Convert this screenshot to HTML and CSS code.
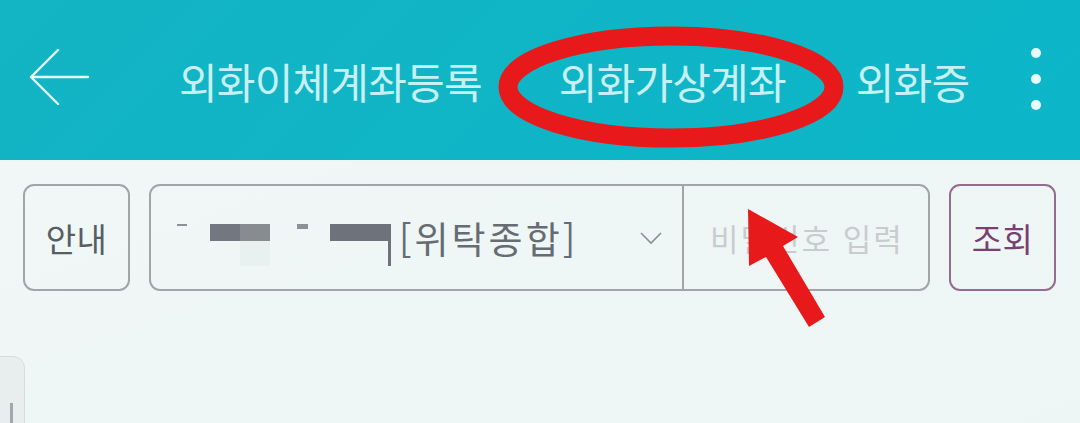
FILE: index.html
```html
<!DOCTYPE html>
<html lang="ko">
<head>
    <meta charset="UTF-8">
    <meta name="viewport" content="width=device-width, initial-scale=1.0">
    <title>외화가상계좌</title>
    <link rel="stylesheet" href="styles.css">
</head>
<body>
    <div class="header">
        <button class="back-btn" aria-label="뒤로">
            <svg width="60" height="56" viewBox="0 0 60 56">
                <path d="M59 28 H2 M29 1 L2 28 L29 55" fill="none" stroke="#e6f9fa" stroke-width="2.4" stroke-linecap="round" stroke-linejoin="round"/>
            </svg>
        </button>
        <div class="tabs">
            <div class="tab tab-first">외화이체계좌등록</div>
            <div class="tab tab-active">외화가상계좌</div>
            <div class="tab tab-last">외화증</div>
        </div>
        <div class="more-btn">
            <span></span><span></span><span></span>
        </div>

        <!-- annotation: circle around active tab -->
        <svg class="mark-ellipse" width="350" height="124" viewBox="0 0 350 124">
            <ellipse cx="173" cy="61" rx="163" ry="51" fill="none" stroke="#e8191a" stroke-width="19"/>
        </svg>
    </div>

    <div class="content">
        <div class="search-row">
            <button class="btn-info">안내</button>
            <div class="account-group">
                <div class="account-select">
                    <svg class="masked" width="216" height="46" viewBox="0 0 216 46">
                        <rect x="0" y="3" width="10" height="2" fill="#8d9196"/>
                        <rect x="33" y="3" width="30" height="17" fill="#737880"/>
                        <rect x="63" y="3" width="30" height="17" fill="#888c91"/>
                        <rect x="63" y="20" width="30" height="25" fill="#e9f1f0"/>
                        <rect x="120" y="3" width="11" height="5" fill="#8d9196"/>
                        <rect x="153" y="3" width="60" height="17" fill="#6e737b"/>
                        <rect x="211" y="3" width="3" height="42" fill="#6e737b"/>
                    </svg>
                    <span class="account-name">[위탁종합]</span>
                    <svg class="chevron" width="22" height="13" viewBox="0 0 22 13">
                        <path d="M1 1 L11 11 L21 1" fill="none" stroke="#8a8f95" stroke-width="1.6"/>
                    </svg>
                </div>
                <input class="pw-input" type="password" placeholder="비밀번호 입력">
            </div>
            <button class="btn-search">조회</button>
        </div>

        <div class="side-card">
            <div class="side-card-line"></div>
        </div>

        <!-- annotation: arrow pointing at password field -->
        <svg class="mark-arrow" width="1080" height="423" viewBox="0 0 1080 423">
            <polygon points="748,209 798,237 783,246 825,317 809,327 766,257 749,266" fill="#e8191a"/>
        </svg>
    </div>
</body>
</html>
```

FILE: styles.css
```css
* {
    margin: 0;
    padding: 0;
    box-sizing: border-box;
}

body {
    width: 1080px;
    height: 423px;
    overflow: hidden;
    font-family: "Noto Sans CJK KR", "Noto Sans", sans-serif;
    background: linear-gradient(160deg, #f1f8f7 0%, #edf6f5 100%);
}

.header {
    position: relative;
    height: 160px;
    display: flex;
    align-items: center;
    padding-left: 29px;
    background: linear-gradient(135deg, #13b4c4 0%, #0cb6c8 100%);
}

.back-btn {
    display: flex;
    background: none;
    border: none;
    margin-top: -6px;
}

.tabs {
    display: flex;
    align-items: center;
    margin-left: 90px;
}

.tab {
    font-size: 42px;
    letter-spacing: -0.8px;
    color: #c6f0f3;
    white-space: nowrap;
}

.tab-active {
    margin-left: 77px;
}

.tab-last {
    margin-left: 70px;
}

.more-btn {
    display: flex;
    flex-direction: column;
    gap: 16px;
    margin-left: auto;
    margin-right: 39px;
    margin-top: -3px;
}

.more-btn span {
    width: 10px;
    height: 10px;
    border-radius: 50%;
    background: #e8fafb;
}

.mark-ellipse {
    position: absolute;
    left: 498px;
    top: 26px;
}

.content {
    position: relative;
}

.search-row {
    display: flex;
    gap: 19px;
    padding: 24px 0 0 23px;
}

.btn-info,
.btn-search {
    width: 107px;
    height: 107px;
    background: transparent;
    border: 2px solid #a0a5aa;
    border-radius: 11px;
    font-family: inherit;
    font-size: 33px;
    letter-spacing: 0.5px;
    color: #585d64;
}

.btn-search {
    border-color: #946c8e;
    color: #7a3f71;
}

.account-group {
    display: flex;
    width: 781px;
    height: 107px;
    border: 2px solid #a0a5aa;
    border-radius: 11px;
}

.account-select {
    display: flex;
    align-items: center;
    width: 533px;
    padding-left: 26px;
    border-right: 2px solid #a0a5aa;
}

.masked {
    margin-top: 12px;
}

.account-name {
    margin-left: 6px;
    font-size: 37px;
    color: #676c73;
    letter-spacing: 3px;
}

.chevron {
    margin-left: auto;
    margin-right: 20px;
    margin-top: 2px;
}

.pw-input {
    flex: 1;
    min-width: 0;
    border: none;
    background: transparent;
    padding-left: 26px;
    font-family: inherit;
    font-size: 31px;
    letter-spacing: 2px;
    outline: none;
}

.pw-input::placeholder {
    color: #c9cccf;
}

.side-card {
    width: 60px;
    height: 80px;
    margin: 65px 0 0 -35px;
    background: #e8eeee;
    border: 1px solid #d6dbdc;
    border-radius: 0 12px 0 0;
    padding: 46px 0 0 44px;
}

.side-card-line {
    width: 3px;
    height: 30px;
    background: #a3a7ab;
}

.mark-arrow {
    position: absolute;
    left: 0;
    top: -160px;
    pointer-events: none;
}
```
